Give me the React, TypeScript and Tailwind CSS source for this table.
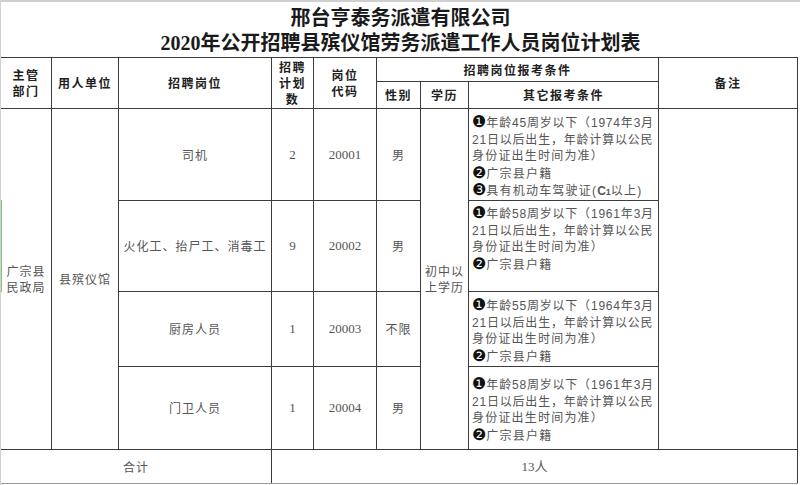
import React from 'react';

const line = 'border-t border-r border-[#3c3c3c]';
const head = `${line} flex flex-col items-center justify-center text-center text-[12px] font-bold text-[#222] tracking-[1.5px] leading-[16px]`;
const body = `${line} flex flex-col items-center justify-center text-center text-[12px] text-[#555] tracking-[1px] leading-[16px]`;
const num = `${line} flex items-center justify-center text-[13px] text-[#555] font-['Liberation_Serif','Noto_Sans_CJK_SC',serif]`;

const serifCjk = "font-['Liberation_Serif','Noto_Sans_CJK_SC',serif]";

function Dot({ n }: { n: string }) {
  return <span className="font-['DejaVu_Sans',sans-serif] text-[16px] leading-none text-[#111] tracking-normal">{n}</span>;
}

interface Post {
  name: string;
  count: string;
  code: string;
  gender: string;
  age: string;
  year: string;
  pad: string;
  licence?: boolean;
}

const posts: Post[] = [
  { name: '司机', count: '2', code: '20001', gender: '男', age: '45', year: '1974', pad: 'pt-[5px]', licence: true },
  { name: '火化工、抬尸工、消毒工', count: '9', code: '20002', gender: '男', age: '58', year: '1961', pad: 'pt-[4px]' },
  { name: '厨房人员', count: '1', code: '20003', gender: '不限', age: '55', year: '1964', pad: 'pt-[5px]' },
  { name: '门卫人员', count: '1', code: '20004', gender: '男', age: '58', year: '1961', pad: 'pt-[9px]' },
];

const rowStart = ['row-start-3', 'row-start-4', 'row-start-5', 'row-start-6'];

function Conditions({ p, row }: { p: Post; row: string }) {
  return (
    <div className={`${line} col-start-8 ${row} ${p.pad} pl-[3px] text-[12px] text-[#555] tracking-[1.2px] leading-[16.5px] font-['Liberation_Sans','Noto_Sans_CJK_SC',sans-serif] whitespace-nowrap overflow-hidden`}>
      <div className="tracking-[0.8px]">
        <Dot n="❶" />年龄{p.age}周岁以下（{p.year}年3月
      </div>
      <div className="tracking-[0.8px]">21日以后出生，年龄计算以公民</div>
      <div>身份证出生时间为准）</div>
      <div>
        <Dot n="❷" />广宗县户籍
      </div>
      {p.licence && (
        <div>
          <Dot n="❸" />具有机动车驾驶证(<span className="font-bold tracking-normal">C</span>
          <span className="text-[9px] font-bold tracking-normal">1</span>以上)
        </div>
      )}
    </div>
  );
}

export default function App() {
  return (
    <div className="relative w-[800px] h-[485px] bg-white border-t-2 border-l border-[#cfcfcf] overflow-hidden font-['Noto_Sans_CJK_SC',sans-serif]">
      <div className={`h-[55px] pt-[4px] flex flex-col items-center text-[20px] leading-[25px] font-bold text-[#1a1a1a] ${serifCjk}`}>
        <div>邢台亨泰务派遣有限公司</div>
        <div>2020年公开招聘县殡仪馆劳务派遣工作人员岗位计划表</div>
      </div>

      <div className="grid w-[797px] grid-cols-[51px_67px_153px_42px_63px_44px_48px_190px_139px] grid-rows-[24px_27px_92px_91px_75px_83px_34px] border-b border-[#9a9a9a]">
        <div className={`${head} col-start-1 row-start-1 row-span-2`}>
          <span>主管</span>
          <span>部门</span>
        </div>
        <div className={`${head} col-start-2 row-start-1 row-span-2`}>用人单位</div>
        <div className={`${head} col-start-3 row-start-1 row-span-2`}>招聘岗位</div>
        <div className={`${head} col-start-4 row-start-1 row-span-2`}>
          <span>招聘</span>
          <span>计划</span>
          <span>数</span>
        </div>
        <div className={`${head} col-start-5 row-start-1 row-span-2`}>
          <span>岗位</span>
          <span>代码</span>
        </div>
        <div className={`${head} col-start-6 col-span-3 row-start-1`}>招聘岗位报考条件</div>
        <div className={`${head} col-start-9 row-start-1 row-span-2`}>备注</div>
        <div className={`${head} col-start-6 row-start-2`}>性别</div>
        <div className={`${head} col-start-7 row-start-2`}>学历</div>
        <div className={`${head} col-start-8 row-start-2`}>其它报考条件</div>

        <div className={`${body} col-start-1 row-start-3 row-span-4 tracking-[0.5px]`}>
          <span>广宗县</span>
          <span>民政局</span>
        </div>
        <div className={`${body} col-start-2 row-start-3 row-span-4`}>县殡仪馆</div>

        {posts.map((p, i) => (
          <React.Fragment key={p.code}>
            <div className={`${body} col-start-3 ${rowStart[i]}`}>{p.name}</div>
            <div className={`${num} col-start-4 ${rowStart[i]}`}>{p.count}</div>
            <div className={`${num} col-start-5 ${rowStart[i]}`}>{p.code}</div>
            <div className={`${body} col-start-6 ${rowStart[i]}`}>{p.gender}</div>
            <Conditions p={p} row={rowStart[i]} />
          </React.Fragment>
        ))}

        <div className={`${body} col-start-7 row-start-3 row-span-4 tracking-[1.3px]`}>
          <span>初中以</span>
          <span>上学历</span>
        </div>
        <div className={`${line} col-start-9 row-start-3 row-span-4`} />

        <div className={`${body} col-start-1 col-span-3 row-start-7`}>合计</div>
        <div className={`${body} col-start-4 col-span-6 row-start-7 ${serifCjk} text-[13px] tracking-normal`}>13人</div>
      </div>

      <div className="absolute left-[-1px] top-[198px] w-[2px] h-[92px] bg-[#86c77e]" />
    </div>
  );
}
